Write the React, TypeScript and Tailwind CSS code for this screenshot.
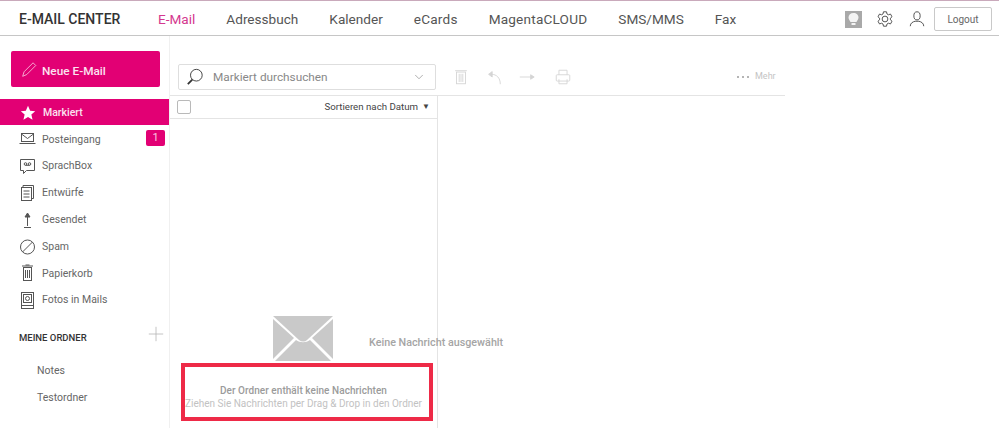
import { ChevronDown } from "lucide-react";
import type { ReactNode } from "react";

const navItems = [
  { label: "Adressbuch", className: "" },
  { label: "Kalender", className: "" },
  { label: "eCards", className: "tracking-[0.2px]" },
  { label: "MagentaCLOUD", className: "tracking-[0.2px]" },
  { label: "SMS/MMS", className: "" },
  { label: "Fax", className: "" },
];

const Icon = ({ children, size = 20, className = "" }: { children: ReactNode; size?: number; className?: string }) => (
  <svg width={size} height={size} viewBox="0 0 20 20" fill="none" stroke="currentColor" strokeWidth="1" className={className}>
    {children}
  </svg>
);

const folders: { label: string; icon: ReactNode; badge?: string }[] = [
  {
    label: "Posteingang",
    badge: "1",
    icon: (
      <>
        <rect x="3.500" y="4.500" width="12" height="8" />
        <path d="M3.500 5l6 4.500 6-4.500M1.500 14.500h16" />
      </>
    ),
  },
  {
    label: "SprachBox",
    icon: (
      <>
        <path d="M2.500 3.500h14v11h-8l-3 3v-3h-3z" />
        <circle cx="7.500" cy="8" r="1.300" />
        <circle cx="11.500" cy="8" r="1.300" />
        <path d="M7.500 9.300h4" />
      </>
    ),
  },
  {
    label: "Entwürfe",
    icon: (
      <>
        <rect x="3.500" y="4.500" width="10" height="13" />
        <path d="M5 4.500V2.500h10.500v13h-2M5.500 8h6M5.500 11h6M5.500 14h6" />
      </>
    ),
  },
  {
    label: "Gesendet",
    icon: (
      <>
        <path d="M9.500 16V6M6 17.500h7" />
        <path d="M9.500 3l-2.500 4h5z" fill="currentColor" />
      </>
    ),
  },
  {
    label: "Spam",
    icon: (
      <>
        <circle cx="9.500" cy="10" r="7" />
        <path d="M4.500 15l10-10" />
      </>
    ),
  },
  {
    label: "Papierkorb",
    icon: (
      <>
        <rect x="5.500" y="4.500" width="8" height="13" />
        <path d="M4 3h11M7.500 2h4M7.500 7v8M9.500 7v8M11.500 7v8" />
      </>
    ),
  },
  {
    label: "Fotos in Mails",
    icon: (
      <>
        <rect x="3.500" y="2.500" width="12" height="16" />
        <rect x="5.500" y="4.500" width="8" height="8" />
        <circle cx="9.500" cy="8.500" r="2" />
        <path d="M3.500 15.500h12" />
      </>
    ),
  },
];

export default function App() {
  return (
    <div className="relative h-[428px] w-[999px] overflow-hidden bg-white font-['Roboto',sans-serif] text-[#4b4b4b]">
      {/* top bar */}
      <header className="flex h-9 items-center border-t border-b border-t-[#c9a9bb] border-b-[#c6c6c6] pr-[7px] pt-[2px]">
        <div className="ml-[19px] w-[139px] text-[14px] font-medium text-[#333]">E-MAIL CENTER</div>
        <nav className="flex gap-[31px] text-[13.6px] text-[#555]">
          <span className="text-[#d4388f]">E-Mail</span>
          {navItems.map((item) => (
            <span key={item.label} className={item.className}>
              {item.label}
            </span>
          ))}
        </nav>
        <div className="ml-auto flex items-center">
          <div className="flex h-[17px] w-[17px] items-center justify-center bg-[#a9a9a9]">
            <svg width="11" height="13" viewBox="0 0 11 13" fill="#f4f4f4">
              <path d="M5.500 0C2.500 0 .5 2 .5 4.500c0 2 1.500 3 2 4.500h6c.5-1.500 2-2.500 2-4.500C10.500 2 8.500 0 5.500 0zM3.500 10h4v2h-4z" />
            </svg>
          </div>
          <Icon size={18} className="ml-[14px] text-[#444]">
            <path d="M8.300 2h3.400l.5 2.400 1.600.9 2.300-.8 1.700 3-1.800 1.600v1.800l1.800 1.600-1.700 3-2.300-.8-1.600.9-.5 2.400H8.300l-.5-2.400-1.600-.9-2.300.8-1.700-3 1.800-1.600V9.100L2.200 7.500l1.700-3 2.300.8 1.600-.9z" />
            <circle cx="10" cy="10" r="3.200" />
          </Icon>
          <Icon size={18} className="ml-[14px] text-[#444]">
            <ellipse cx="10" cy="6.500" rx="3.500" ry="4.500" />
            <path d="M2.500 18c0-3.500 3-5 5.500-5.500h4c2.500.5 5.500 2 5.500 5.500" />
          </Icon>
          <button className="ml-[8px] h-6 w-[58px] rounded-[2px] border border-[#c9c9c9] text-[10px] text-[#666]">Logout</button>
        </div>
      </header>

      <div className="flex h-[392px]">
        {/* left navigation */}
        <aside className="w-[170px] shrink-0 border-r border-[#f0f0f0]">
          <button className="ml-[11px] mt-[15px] flex h-9 w-[149px] items-center rounded-[2px] bg-[#e20074] pl-[9px] pt-[2px] text-[11.8px] font-medium text-[#fbe3f0]">
            <Icon size={18} className="text-[#f6b8d8]">
              <path d="M3 17l1.500-5L14.500 2l3 3-10 10z" />
            </Icon>
            <span className="ml-[4px] pt-[4px]">Neue E-Mail</span>
          </button>
          <div className="mt-3 flex h-[26px] items-center bg-[#e20074] pl-5 pt-[1px] text-[10.5px] font-medium text-[#fbe3f0]">
            <svg width="16" height="16" viewBox="0 0 20 20" fill="white">
              <path d="M10 1l2.700 6.100 6.300.6-4.800 4.300 1.500 6.500L10 15.100l-5.700 3.400 1.500-6.500L1 7.700l6.300-.6z" />
            </svg>
            <span className="ml-[7px]">Markiert</span>
          </div>
          <ul className="pt-[1px] text-[10.5px] text-[#666]">
            {folders.map((f) => (
              <li key={f.label} className="relative flex h-[26.8px] items-center pl-[18px]">
                <Icon size={20} className="text-[#555]">
                  {f.icon}
                </Icon>
                <span className="ml-[4px]">{f.label}</span>
                {f.badge && (
                  <span className="absolute right-1 top-[4px] flex h-4 w-[19px] items-center justify-center rounded-[2px] bg-[#e20074] text-[11px] text-[#f8c8e0]">
                    {f.badge}
                  </span>
                )}
              </li>
            ))}
          </ul>
          <div className="mt-[12px] flex items-start justify-between pl-[19px] pr-[5px]">
            <span className="mt-[5px] text-[9.5px] font-medium text-[#333]">MEINE ORDNER</span>
            <Icon size={16} className="text-[#b5b5b5]">
              <path d="M10 1v18M1 10h18" />
            </Icon>
          </div>
          <ul className="mt-[13px] text-[10.5px] text-[#666]">
            <li className="flex h-[27px] items-center pl-[37px]">Notes</li>
            <li className="flex h-[27px] items-center pl-[37px]">Testordner</li>
          </ul>
        </aside>

        {/* message column and toolbar */}
        <main className="w-[615px] shrink-0">
          <div className="flex h-[60px] items-end border-b border-[#e4e4e4] pb-[5px]">
            <div className="ml-2 flex h-[26px] w-[258px] items-center rounded-[2px] border border-[#dedede] pl-[7px] pr-[9px]">
              <Icon size={18} className="text-[#333]">
                <circle cx="11.500" cy="8" r="6.500" />
                <path d="M7 13l-5 5" strokeWidth="2" />
              </Icon>
              <span className="ml-[9px] pt-[1px] text-[11.8px] text-[#888]">Markiert durchsuchen</span>
              <ChevronDown size={14} strokeWidth={1} className="ml-auto text-[#777]" />
            </div>
            <div className="ml-[16px] flex h-[26px] items-center text-[#d5d5d5]">
              <Icon size={18}>
                <rect x="5" y="4.500" width="10" height="13" />
                <path d="M3.500 3h13M8 6.500v9M10 6.500v9M12 6.500v9" />
              </Icon>
              <Icon size={18} className="ml-[15px]">
                <path d="M17 18c0-7-4-11-10-11" />
                <path d="M8 4L4 7l4 3z" fill="currentColor" />
              </Icon>
              <Icon size={18} className="ml-[15px]">
                <path d="M2 10h14" />
                <path d="M14 7.500l4 2.500-4 2.500z" fill="currentColor" />
              </Icon>
              <Icon size={18} className="ml-[18px]">
                <rect x="2.500" y="7.500" width="15" height="7" rx="1" />
                <path d="M5.500 7.500v-5h9v5M5.500 12.500v5h9v-5" />
              </Icon>
              <span className="ml-[165px] flex items-center gap-[2px]">
                <span className="h-[2px] w-[2px] bg-[#b5b5b5]" />
                <span className="ml-[1px] h-[2px] w-[2px] bg-[#b5b5b5]" />
                <span className="ml-[1px] h-[2px] w-[2px] bg-[#b5b5b5]" />
              </span>
              <span className="ml-[6px] text-[9px] text-[#c4c4c4]">Mehr</span>
            </div>
          </div>
          <div className="h-[332px] w-[268px] border-r border-[#e4e4e4]">
            <div className="flex h-[23px] items-center justify-between border-b border-[#e4e4e4] pl-[7px] pr-[7px]">
              <span className="h-[14px] w-[14px] rounded-[2px] border border-[#b9b9b9]" />
              <span className="flex items-center text-[9.7px] text-[#444]">
                Sortieren nach Datum
                <span className="ml-[4px] text-[8px]">▼</span>
              </span>
            </div>
            <div className="flex flex-col items-center pt-[196px]">
              <svg width="60" height="46" viewBox="0 0 60 46" fill="#c9c9c9" className="mr-[2px]">
                <path d="M0 1l26 24c2.500 2 5.500 2 8 0L60 1z" />
                <path d="M0 4v40l21-21zM60 4v40L39 23zM2 46h56L37 25c-4 3-10 3-14 0z" />
              </svg>
              <p className="mt-[23px] text-[10px] leading-[13px] font-medium tracking-[0.05px] text-[#9b9b9b]">Der Ordner enthält keine Nachrichten</p>
              <p className="whitespace-nowrap text-[10px] leading-[13px] text-[#c2c2c2]">Ziehen Sie Nachrichten per Drag &amp; Drop in den Ordner</p>
            </div>
          </div>
        </main>
      </div>

      <p className="absolute left-[369px] top-[335px] text-[10.75px] font-medium text-[#a5a5a5]">Keine Nachricht ausgewählt</p>
      {/* red annotation drawn over the screenshot */}
      <div className="absolute left-[181px] top-[363px] h-[58px] w-[252px] border-[4px] border-[#ee2a47]" />
    </div>
  );
}
